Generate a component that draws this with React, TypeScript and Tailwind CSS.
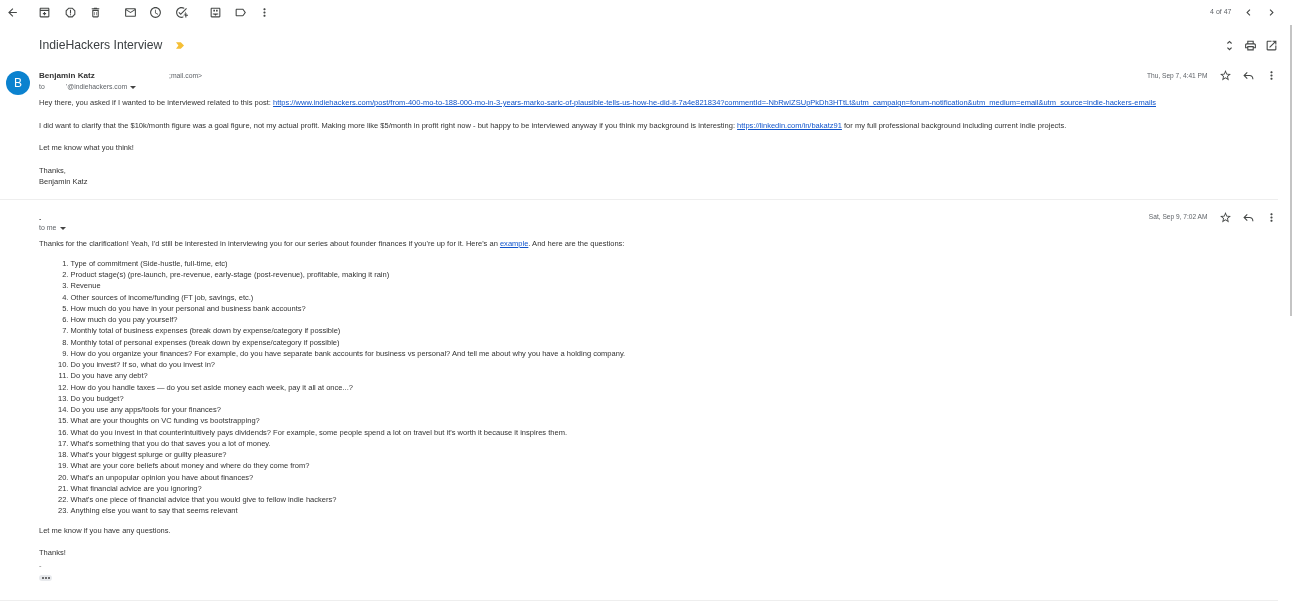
import React from 'react';

const icons: Record<string, string> = {
  back: 'M20 11H7.83l5.59-5.59L12 4l-8 8 8 8 1.41-1.41L7.83 13H20v-2z',
  archive: 'M19 3H5c-1.1 0-2 .9-2 2v14c0 1.1.9 2 2 2h14c1.1 0 2-.9 2-2V5c0-1.1-.9-2-2-2zM5 5h14v2H5V5zm0 14V9h14v10H5zm6-8h2v2h2v2h-2v2h-2v-2H9v-2h2v-2z',
  report: 'M15.73 3H8.27L3 8.27v7.46L8.27 21h7.46L21 15.73V8.27L15.73 3zM19 14.9L14.9 19H9.1L5 14.9V9.1L9.1 5h5.8L19 9.1v5.8zM11 7h2v7h-2zM11 15h2v2h-2z',
  trash: 'M6 19c0 1.1.9 2 2 2h8c1.1 0 2-.9 2-2V7H6v12zM8 9h8v10H8V9zm7.5-5l-1-1h-5l-1 1H5v2h14V4h-3.5zM10 11h1v6h-1zM13 11h1v6h-1z',
  mail: 'M20 4H4c-1.1 0-2 .9-2 2v12c0 1.1.9 2 2 2h16c1.1 0 2-.9 2-2V6c0-1.1-.9-2-2-2zm0 14H4V8l8 5 8-5v10zm-8-7L4 6h16l-8 5z',
  clock: 'M11.99 2C6.47 2 2 6.48 2 12s4.47 10 9.99 10C17.52 22 22 17.52 22 12S17.52 2 11.99 2zM12 20c-4.42 0-8-3.58-8-8s3.58-8 8-8 8 3.58 8 8-3.58 8-8 8zm.5-13H11v6l5.25 3.15.75-1.23-4.5-2.67z',
  task: 'M22 5.18L10.59 16.6l-4.24-4.24 1.41-1.41 2.83 2.83 10-10L22 5.18zm-2.21 5.04c.13.57.21 1.17.21 1.78 0 4.42-3.58 8-8 8s-8-3.58-8-8 3.58-8 8-8c1.58 0 3.04.46 4.28 1.25l1.44-1.44C16.1 2.67 14.13 2 12 2 6.48 2 2 6.48 2 12s4.48 10 10 10c1.2 0 2.3-.2 3.4-.6v-2.2zM19 16h-3v2h3v3h2v-3h3v-2h-3v-3h-2v3z',
  moveto: 'M19 3H5c-1.1 0-2 .9-2 2v14c0 1.1.9 2 2 2h14c1.1 0 2-.9 2-2V5c0-1.1-.9-2-2-2zm0 16H5V5h14v14zM8 7h3v3H8zM13 7h3v3h-3zM7 14h10v1.5h-2.5L12 18l-2.5-2.5H7z',
  label: 'M17.63 5.84C17.27 5.33 16.67 5 16 5L5 5.01C3.9 5.01 3 5.9 3 7v10c0 1.1.9 1.99 2 1.99L16 19c.67 0 1.27-.33 1.63-.84L22 12l-4.37-6.16zM16 17H5V7h11l3.55 5L16 17z',
  more: 'M12 8c1.1 0 2-.9 2-2s-.9-2-2-2-2 .9-2 2 .9 2 2 2zm0 2c-1.1 0-2 .9-2 2s.9 2 2 2 2-.9 2-2-.9-2-2-2zm0 6c-1.1 0-2 .9-2 2s.9 2 2 2 2-.9 2-2-.9-2-2-2z',
  left: 'M15.41 7.41L14 6l-6 6 6 6 1.41-1.41L10.83 12z',
  right: 'M10 6L8.59 7.41 13.17 12l-4.58 4.59L10 18l6-6z',
  unfold: 'M12 5.83L15.17 9l1.41-1.41L12 3 7.41 7.59 8.83 9 12 5.83zm0 12.34L8.83 15l-1.41 1.41L12 21l4.59-4.59L15.17 15 12 18.17z',
  print: 'M19 8h-1V3H6v5H5c-1.66 0-3 1.34-3 3v6h4v4h12v-4h4v-6c0-1.66-1.34-3-3-3zM8 5h8v3H8V5zm8 12v2H8v-4h8v2zm2-2v-2H6v2H4v-4c0-.55.45-1 1-1h14c.55 0 1 .45 1 1v4h-2z',
  open: 'M19 19H5V5h7V3H5c-1.11 0-2 .9-2 2v14c0 1.1.89 2 2 2h14c1.1 0 2-.9 2-2v-7h-2v7zM14 3v2h3.59l-9.83 9.83 1.41 1.41L19 6.41V10h2V3h-7z',
  star: 'M22 9.24l-7.19-.62L12 2 9.19 8.63 2 9.24l5.46 4.73L5.82 21 12 17.27 18.18 21l-1.63-7.03L22 9.24zM12 15.4l-3.76 2.27 1-4.28-3.32-2.88 4.38-.38L12 6.1l1.71 4.04 4.38.38-3.32 2.88 1 4.28L12 15.4z',
  reply: 'M9 5.5L2.5 12 9 18.5l1.4-1.4L6.3 13H14c3 0 5 2 5 5v1h2v-1c0-4-3-7-7-7H6.3l4.1-4.1L9 5.5z',
};

function Icon({ name, className = 'w-[13px] h-[13px]' }: { name: string; className?: string }) {
  return (
    <svg viewBox="0 0 24 24" className={`${className} fill-[#444746] shrink-0`}>
      <path d={icons[name]} />
    </svg>
  );
}

function Caret() {
  return <span className="ml-[3px] inline-block w-0 h-0 border-x-[3px] border-x-transparent border-t-[3px] border-t-[#444] align-middle" />;
}

function HeaderActions({ date }: { date: string }) {
  return (
    <div className="flex items-center">
      <span className="text-[#5f6368] text-[6.6px] mr-[11.5px]">{date}</span>
      <Icon name="star" className="w-[13px] h-[13px] mr-[10px]" />
      <Icon name="reply" className="w-[13px] h-[13px] mr-[10px]" />
      <Icon name="more" />
    </div>
  );
}

const questions = [
  'Type of commitment (Side-hustle, full-time, etc)',
  'Product stage(s) (pre-launch, pre-revenue, early-stage (post-revenue), profitable, making it rain)',
  'Revenue',
  'Other sources of income/funding (FT job, savings, etc.)',
  'How much do you have in your personal and business bank accounts?',
  'How much do you pay yourself?',
  'Monthly total of business expenses (break down by expense/category if possible)',
  'Monthly total of personal expenses (break down by expense/category if possible)',
  "How do you organize your finances? For example, do you have separate bank accounts for business vs personal? And tell me about why you have a holding company.",
  'Do you invest? If so, what do you invest in?',
  'Do you have any debt?',
  'How do you handle taxes — do you set aside money each week, pay it all at once...?',
  'Do you budget?',
  'Do you use any apps/tools for your finances?',
  'What are your thoughts on VC funding vs bootstrapping?',
  "What do you invest in that counterintuitively pays dividends? For example, some people spend a lot on travel but it's worth it because it inspires them.",
  "What's something that you do that saves you a lot of money.",
  "What's your biggest splurge or guilty pleasure?",
  'What are your core beliefs about money and where do they come from?',
  "What's an unpopular opinion you have about finances?",
  'What financial advice are you ignoring?',
  "What's one piece of financial advice that you would give to fellow indie hackers?",
  'Anything else you want to say that seems relevant',
];

const linkClass = 'text-[#1155cc] underline';

export default function App() {
  return (
    <div className="relative w-[1292px] h-[601px] overflow-hidden bg-white blur-[0.3px] text-[#333] font-['Liberation_Sans',Arial,sans-serif] text-[7.53px] leading-[11.25px] whitespace-nowrap">
      {/* toolbar */}
      <div className="flex items-center h-[24px] pl-[6px] pr-[14px]">
        <Icon name="back" />
        <div className="flex items-center gap-[12.5px] ml-[19px]">
          <Icon name="archive" />
          <Icon name="report" />
          <Icon name="trash" />
        </div>
        <div className="flex items-center gap-[12.5px] ml-[21.5px]">
          <Icon name="mail" />
          <Icon name="clock" />
          <Icon name="task" />
        </div>
        <div className="flex items-center gap-[12.5px] ml-[21px]">
          <Icon name="moveto" />
          <Icon name="label" />
          <Icon name="more" className="w-[13px] h-[13px] -ml-[2px]" />
        </div>
        <span className="ml-auto text-[#5f6368] text-[7px] mr-[10.5px]">4 of 47</span>
        <Icon name="left" />
        <Icon name="right" className="w-[13px] h-[13px] ml-[10px]" />
      </div>

      {/* subject */}
      <div className="flex items-center h-[18px] mt-[12px] pl-[39px] pr-[14px]">
        <span className="text-[12.2px] leading-[18px] text-[#3c4043]">IndieHackers Interview</span>
        <svg viewBox="0 0 10 8" className="w-[8px] h-[7px] ml-[14px] fill-[#f5bf36]">
          <path d="M0 0h6l4 4-4 4H0l3-4z" />
        </svg>
        <Icon name="unfold" className="w-[13px] h-[13px] ml-auto" />
        <Icon name="print" className="w-[13px] h-[13px] ml-[8px]" />
        <Icon name="open" className="w-[13px] h-[13px] ml-[8px]" />
      </div>

      {/* first message */}
      <div className="flex mt-[16px] mr-[14px] pl-[6px] h-[130px] border-b border-[#eeeeee]">
        <div className="w-[24px] h-[24px] mt-[1px] shrink-0 rounded-full bg-[#0b82cf] text-white text-[12px] leading-[24px] text-center">B</div>
        <div className="ml-[9px] flex-1">
          <div className="flex justify-between h-[11px]">
            <div className="flex items-center">
              <b className="font-bold text-[#333] text-[8.1px] w-[130px]">Benjamin Katz</b>
              <span className="text-[#5f6368] text-[6.8px]">;mail.com&gt;</span>
            </div>
            <HeaderActions date="Thu, Sep 7, 4:41 PM" />
          </div>
          <div className="flex items-center h-[12px] text-[#5f6368] text-[6.8px]">
            <span className="w-[27px]">to</span>
            <span>'@indiehackers.com</span>
            <Caret />
          </div>
          <p className="mt-[4px]">
            Hey there, you asked if I wanted to be interviewed related to this post:{' '}
            <a className={linkClass}>https://www.indiehackers.com/post/from-400-mo-to-188-000-mo-in-3-years-marko-saric-of-plausible-tells-us-how-he-did-it-7a4e821834?commentId=-NbRwIZSUpPkDh3HTtLt&amp;utm_campaign=forum-notification&amp;utm_medium=email&amp;utm_source=indie-hackers-emails</a>
          </p>
          <p className="mt-[11.25px]">
            I did want to clarify that the $10k/month figure was a goal figure, not my actual profit. Making more like $5/month in profit right now - but happy to be interviewed anyway if you think my background is interesting:{' '}
            <a className={linkClass}>https://linkedin.com/in/bakatz91</a> for my full professional background including current indie projects.
          </p>
          <p className="mt-[11.25px]">Let me know what you think!</p>
          <p className="mt-[11.25px]">Thanks,</p>
          <p>Benjamin Katz</p>
        </div>
      </div>

      {/* second message */}
      <div className="pl-[39px] pr-[14px] pt-[12px]">
        <div className="flex justify-between h-[10px]">
          <b className="font-bold text-[#333] text-[8.1px]">.</b>
          <HeaderActions date="Sat, Sep 9, 7:02 AM" />
        </div>
        <div className="flex items-center h-[12px] text-[#5f6368] text-[7px]">
          to me
          <Caret />
        </div>
        <p className="mt-[4px]">
          Thanks for the clarification! Yeah, I'd still be interested in interviewing you for our series about founder finances if you're up for it. Here's an{' '}
          <a className={linkClass}>example</a>. And here are the questions:
        </p>
        <ol className="mt-[8.5px] mb-[8px] list-decimal pl-[31.5px]">
          {questions.map((q) => (
            <li key={q}>{q}</li>
          ))}
        </ol>
        <p>Let me know if you have any questions.</p>
        <p className="mt-[11.25px]">Thanks!</p>
        <p className="mt-[2px] h-[11px] text-[#777]">-</p>
        <div className="mt-[4px] flex items-center justify-center gap-[1px] w-[13px] h-[6px] rounded-full bg-[#e8eaed]">
          <span className="w-[2px] h-[2px] rounded-full bg-[#444]" />
          <span className="w-[2px] h-[2px] rounded-full bg-[#444]" />
          <span className="w-[2px] h-[2px] rounded-full bg-[#444]" />
        </div>
      </div>

      {/* bottom rule and scrollbar */}
      <div className="absolute left-0 bottom-0 w-[1278px] border-b border-[#eeeeee]" />
      <div className="absolute right-0 top-[25px] w-[2px] h-[291px] bg-[#c4c4c4]" />
    </div>
  );
}
